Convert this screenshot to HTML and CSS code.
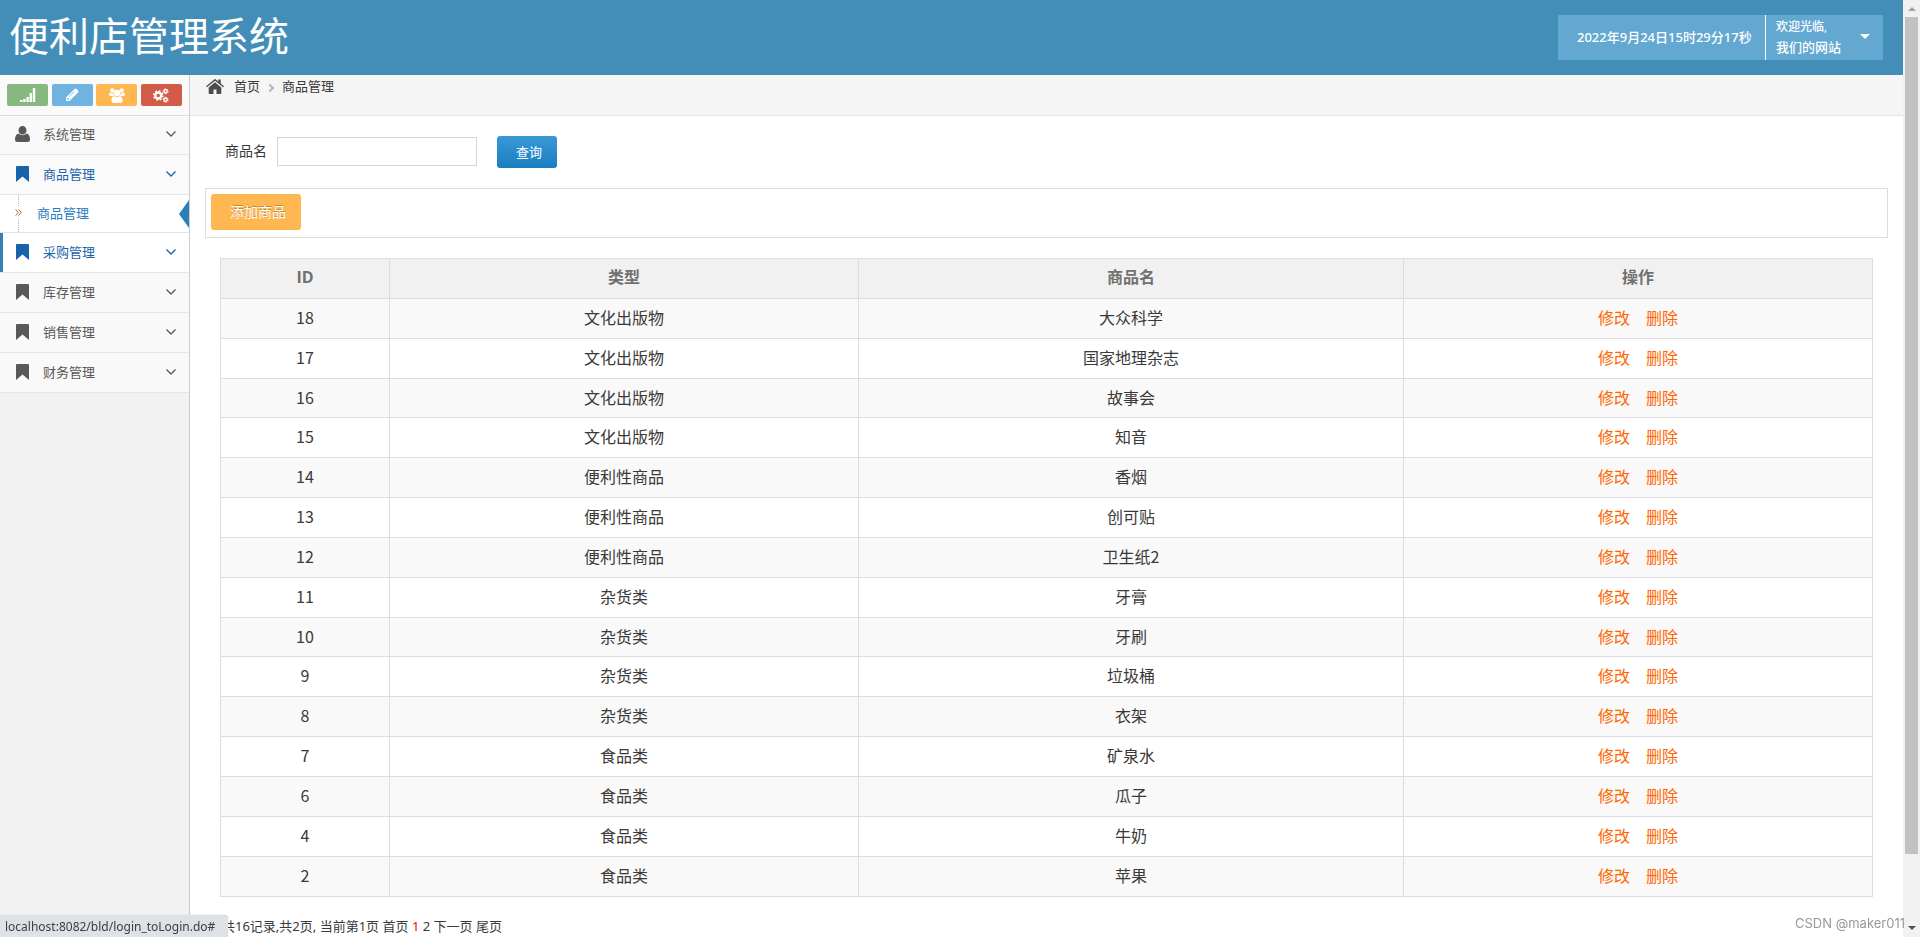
FILE: index.html
```html
<!DOCTYPE html>
<html lang="zh-CN">
<head>
<meta charset="utf-8">
<title>便利店管理系统</title>
<link rel="stylesheet" href="styles.css">
</head>
<body>
<svg class="sprite" aria-hidden="true">
  <symbol id="bookmark" viewBox="0 0 14 16"><path d="M1.500 0h11q1 0 1 1v15L7 10.500 .5 16V1q0-1 1-1z"/></symbol>
  <symbol id="user" viewBox="0 0 15 16"><path d="M7.500 0a4 4.300 0 0 1 0 8.600A4 4.300 0 0 1 7.500 0zM3.500 7.600Q7.500 11 11.500 7.600 15 8.500 15 13.500 15 16 12.500 16h-10Q0 16 0 13.500 0 8.500 3.500 7.600z"/></symbol>
  <symbol id="chevron" viewBox="0 0 10 6"><path d="M.5.500 5 5 9.500.5" fill="none" stroke="currentColor" stroke-width="1.300"/></symbol>
  <symbol id="signal" viewBox="0 0 16 14"><path d="M0 12h2.400v2H0zM3.200 11h2.400v3H3.200zM6.400 9h2.400v5H6.400zM9.600 5H12v9H9.600zM12.800 0h2.400v14h-2.400z"/></symbol>
  <symbol id="pencil" viewBox="0 0 14 14"><path fill-rule="evenodd" d="M1 9.500 9.500 1q1-1 2 0l1.500 1.500q1 1 0 2L4.500 13H1zM3 9.700 2.200 10.600v1.200h1.200l.9-.8zM8.700 3.600 4 8.400l.4.400 4.800-4.700z"/></symbol>
  <symbol id="group" viewBox="0 0 16 15"><circle cx="3.300" cy="2.500" r="2.200"/><circle cx="12.700" cy="2.500" r="2.200"/><circle cx="8" cy="5" r="3.200"/><path d="M1.200 4.700Q3 5.700 4.300 5.200q0 1.800 1 2.800H1.500Q0 8 0 6.800 0 5.200 1.200 4.700zM14.800 4.700Q13 5.700 11.700 5.200q0 1.800-1 2.800h3.800Q16 8 16 6.800q0-1.600-1.200-2.100zM5 8q3 2 6 0 2.600.5 2.600 4.800 0 2.200-2 2.200H4.400q-2 0-2-2.200Q2.400 8.500 5 8z"/></symbol>
  <symbol id="cogs" viewBox="0 0 16 15"><g fill="none" stroke="currentColor"><circle cx="5.200" cy="7.500" r="3" stroke-width="2.400"/><circle cx="5.200" cy="7.500" r="4.600" stroke-width="1.500" stroke-dasharray="1.800 1.813"/><circle cx="12.600" cy="3.300" r="1.600" stroke-width="1.500"/><circle cx="12.600" cy="3.300" r="2.600" stroke-width="1" stroke-dasharray="1.200 1.522"/><circle cx="12.600" cy="11.700" r="1.600" stroke-width="1.500"/><circle cx="12.600" cy="11.700" r="2.600" stroke-width="1" stroke-dasharray="1.200 1.522"/></g></symbol>
  <symbol id="home" viewBox="0 0 18 15"><path d="M9 3.200 15.300 8.500V14q0 1-1 1h-3.800v-4.500h-3V15H3.700q-1 0-1-1V8.500zM8.200.4q.8-.6 1.600 0L12.300 2.500V.6h2.400v3.900L18 7.300l-.8 1L9 1.700.8 8.300 0 7.300z"/></symbol>
  <symbol id="angles" viewBox="0 0 7 7"><path d="M.6.500 3.200 3.500.6 6.500M3.600.5 6.200 3.500 3.600 6.500" fill="none" stroke="currentColor"/></symbol>
</svg>
<div class="window">
<div class="app">
  <header class="topbar">
    <h1 class="brand">便利店管理系统</h1>
    <div class="userbar">
      <time class="clock">2022年9月24日15时29分17秒</time>
      <button class="welcome" type="button"><span><small>欢迎光临,</small><br>我们的网站</span><i class="caret"></i></button>
    </div>
  </header>
  <div class="body">
    <aside class="sidebar">
      <div class="shortcuts">
        <button class="short green" type="button" aria-label="统计"><svg width="16" height="14"><use href="#signal"/></svg></button>
        <button class="short blue" type="button" aria-label="编辑"><svg width="14" height="14"><use href="#pencil"/></svg></button>
        <button class="short orange" type="button" aria-label="用户"><svg width="16" height="15"><use href="#group"/></svg></button>
        <button class="short red" type="button" aria-label="设置"><svg width="16" height="15"><use href="#cogs"/></svg></button>
      </div>
      <nav class="nav">
        <a class="item" href="#"><svg class="icon" width="15" height="16"><use href="#user"/></svg><span>系统管理</span><svg class="chev" width="10" height="6"><use href="#chevron"/></svg></a>
        <a class="item open" href="#"><svg class="icon" width="15" height="16"><use href="#bookmark"/></svg><span>商品管理</span><svg class="chev" width="10" height="6"><use href="#chevron"/></svg></a>
        <a class="subitem" href="#"><svg class="angles" width="7" height="7"><use href="#angles"/></svg><span>商品管理</span></a>
        <a class="item hover" href="#"><svg class="icon" width="15" height="16"><use href="#bookmark"/></svg><span>采购管理</span><svg class="chev" width="10" height="6"><use href="#chevron"/></svg></a>
        <a class="item" href="#"><svg class="icon" width="15" height="16"><use href="#bookmark"/></svg><span>库存管理</span><svg class="chev" width="10" height="6"><use href="#chevron"/></svg></a>
        <a class="item" href="#"><svg class="icon" width="15" height="16"><use href="#bookmark"/></svg><span>销售管理</span><svg class="chev" width="10" height="6"><use href="#chevron"/></svg></a>
        <a class="item" href="#"><svg class="icon" width="15" height="16"><use href="#bookmark"/></svg><span>财务管理</span><svg class="chev" width="10" height="6"><use href="#chevron"/></svg></a>
      </nav>
    </aside>
    <main class="main">
      <div class="crumbs"><svg class="home" width="18" height="15"><use href="#home"/></svg><a href="#">首页</a><i class="sep"></i><span>商品管理</span></div>
      <form class="search">
        <label for="name">商品名</label>
        <input id="name" type="text">
        <button class="query" type="button">查询</button>
      </form>
      <div class="toolbar"><button class="add" type="button">添加商品</button></div>
      <table class="grid">
        <colgroup><col class="c-id"><col class="c-type"><col class="c-name"><col class="c-act"></colgroup>
        <thead><tr><th>ID</th><th>类型</th><th>商品名</th><th>操作</th></tr></thead>
        <tbody>
          <tr><td>18</td><td>文化出版物</td><td>大众科学</td><td><a href="#">修改</a><a href="#">删除</a></td></tr>
          <tr><td>17</td><td>文化出版物</td><td>国家地理杂志</td><td><a href="#">修改</a><a href="#">删除</a></td></tr>
          <tr><td>16</td><td>文化出版物</td><td>故事会</td><td><a href="#">修改</a><a href="#">删除</a></td></tr>
          <tr><td>15</td><td>文化出版物</td><td>知音</td><td><a href="#">修改</a><a href="#">删除</a></td></tr>
          <tr><td>14</td><td>便利性商品</td><td>香烟</td><td><a href="#">修改</a><a href="#">删除</a></td></tr>
          <tr><td>13</td><td>便利性商品</td><td>创可贴</td><td><a href="#">修改</a><a href="#">删除</a></td></tr>
          <tr><td>12</td><td>便利性商品</td><td>卫生纸2</td><td><a href="#">修改</a><a href="#">删除</a></td></tr>
          <tr><td>11</td><td>杂货类</td><td>牙膏</td><td><a href="#">修改</a><a href="#">删除</a></td></tr>
          <tr><td>10</td><td>杂货类</td><td>牙刷</td><td><a href="#">修改</a><a href="#">删除</a></td></tr>
          <tr><td>9</td><td>杂货类</td><td>垃圾桶</td><td><a href="#">修改</a><a href="#">删除</a></td></tr>
          <tr><td>8</td><td>杂货类</td><td>衣架</td><td><a href="#">修改</a><a href="#">删除</a></td></tr>
          <tr><td>7</td><td>食品类</td><td>矿泉水</td><td><a href="#">修改</a><a href="#">删除</a></td></tr>
          <tr><td>6</td><td>食品类</td><td>瓜子</td><td><a href="#">修改</a><a href="#">删除</a></td></tr>
          <tr><td>4</td><td>食品类</td><td>牛奶</td><td><a href="#">修改</a><a href="#">删除</a></td></tr>
          <tr><td>2</td><td>食品类</td><td>苹果</td><td><a href="#">修改</a><a href="#">删除</a></td></tr>
        </tbody>
      </table>
      <div class="pager">共16记录,共2页, 当前第1页 <a href="#">首页</a> <b>1</b> <a href="#">2</a> <a href="#">下一页</a> <a href="#">尾页</a></div>
    </main>
  </div>
</div>
<div class="scrollbar"><i class="up"></i><i class="thumb"></i><i class="down"></i></div>
</div>
<div class="status">localhost:8082/bld/login_toLogin.do#</div>
<div class="watermark">CSDN @maker011</div>
</body>
</html>
```
FILE: styles.css
```css
* { box-sizing: border-box; }
body {
  margin: 0;
  overflow: hidden;
  background: #fff;
  color: #393939;
  font: 13px/20px "Open Sans", "Noto Sans CJK SC", sans-serif;
}
a { color: inherit; text-decoration: none; }
button { border: 0; padding: 0; font: inherit; cursor: pointer; }
svg { fill: currentColor; flex: none; }
.sprite { display: none; }

.window { display: flex; height: 100vh; }
.app { flex: 1; min-width: 0; display: flex; flex-direction: column; }

.topbar {
  display: flex;
  justify-content: space-between;
  align-items: center;
  height: 75px;
  flex: none;
  padding: 0 20px 0 9px;
  background: #438eb9;
  color: #fff;
}
.brand { margin: 0; padding-bottom: 3px; font-size: 40px; line-height: 72px; font-weight: 400; }
.userbar { display: flex; height: 45px; }
.clock {
  width: 208px;
  padding-left: 19px;
  background: #62a8d1;
  border-right: 1px solid #fff;
  font-family: "Noto Sans", "Noto Sans CJK SC", sans-serif;
  font-weight: 500;
  line-height: 45px;
  white-space: nowrap;
}
.welcome {
  display: flex;
  align-items: center;
  justify-content: space-between;
  width: 117px;
  padding: 0 13px 2px 10px;
  background: #62a8d1;
  color: #fff;
  font-weight: 500;
  text-align: left;
  line-height: 21px;
}
.welcome small { font-size: 12px; }
.caret { border: 5px solid transparent; border-top: 5px solid #fff; border-bottom: 0; }

.body { flex: 1; display: flex; }
.sidebar { width: 190px; flex: none; background: #f2f2f2; border-right: 1px solid #ccc; }
.shortcuts {
  display: flex;
  justify-content: space-between;
  padding: 9px 7px;
  height: 40px;
  background: #fafafa;
}
.short {
  display: flex;
  align-items: center;
  justify-content: center;
  width: 41px;
  height: 22px;
  border-radius: 2px;
  color: #fff;
}
.green { background: #87b87f; }
.blue { background: #6fb3e0; }
.orange { background: #ffb752; }
.red { background: #d15b47; }

.nav { border-top: 1px solid #ddd; }
.item {
  display: flex;
  align-items: center;
  height: 40px;
  padding: 0 13px 2px 15px;
  background: #f9f9f9;
  border-bottom: 1px solid #e5e5e5;
  color: #585858;
}
.item:first-child { height: 39px; }
.item .icon { margin-right: 13px; }
.item .chev { margin-left: auto; }
.open { color: #1963aa; background: #fafafa; }
.hover { color: #1963aa; background: #fff; box-shadow: inset 3px 0 #3382af; }
.subitem {
  display: flex;
  align-items: center;
  position: relative;
  height: 38px;
  padding: 0 0 2px 15px;
  background: #fff;
  border-bottom: 1px solid #e5e5e5;
  color: #2b7dbc;
}
.subitem::before {
  content: "";
  position: absolute;
  left: 18px;
  top: 0;
  bottom: 0;
  border-left: 1px dotted #9dbdd6;
}
.subitem::after {
  content: "";
  position: absolute;
  right: 0;
  top: 5px;
  border: 14px solid transparent;
  border-right: 10px solid #2b7dbc;
  border-left: 0;
}
.subitem .angles { position: relative; background: #fff; color: #c86139; outline: 2px solid #fff; margin-right: 15px; }

.main { flex: 1; min-width: 0; }
.crumbs {
  display: flex;
  align-items: flex-start;
  height: 41px;
  padding: 1px 16px;
  background: #f5f5f5;
  border-bottom: 1px solid #e5e5e5;
}
.home { margin: 3px 10px 0 0; color: #4c4c4c; }
.sep {
  width: 6px;
  height: 6px;
  margin: 9px 9px 0 7px;
  border: solid #b2b6bf;
  border-width: 2px 2px 0 0;
  transform: rotate(45deg);
}
.search { display: flex; align-items: center; height: 72px; padding-left: 35px; font-size: 14px; }
.search label { padding-bottom: 2px; }
.search input { width: 200px; height: 29px; margin: 0 20px 1px 10px; border: 1px solid #d5d5d5; font: inherit; }
.query {
  width: 60px;
  height: 32px;
  padding-left: 4px;
  border-radius: 3px;
  background: linear-gradient(#3b98d6, #197ec1);
  color: #fff;
  font-size: 13px;
}
.toolbar { height: 50px; margin: 0 15px; padding: 5px; border: 1px solid #ddd; }
.add {
  width: 90px;
  height: 36px;
  padding: 0 0 1px 4px;
  border-radius: 3px;
  background: #ffb752;
  color: #fff;
  font-size: 14px;
  text-shadow: 0 -1px 0 rgba(0, 0, 0, .25);
}

.grid {
  width: calc(100% - 60px);
  margin: 20px 30px 0;
  border-collapse: collapse;
  table-layout: fixed;
  font-family: "Noto Sans CJK SC", sans-serif;
  font-size: 16px;
  text-align: center;
}
.c-id { width: 169px; }
.c-type, .c-act { width: 28.4%; }
.grid th, .grid td { height: 40px; padding: 0 0 3px; border: 1px solid #ddd; font-weight: 400; }
.grid th {
  background: #f1f1f1;
  color: #707070;
  font-family: "Open Sans", "Noto Sans CJK SC", sans-serif;
  font-weight: 700;
}
.grid tbody tr:nth-child(odd) { background: #f9f9f9; }
.grid tbody tr:nth-child(3) td, .grid tbody tr:nth-child(9) td { height: 39px; }
.grid td a { color: #f60; }
.grid td a + a { margin-left: 16px; }

.pager { padding: 19px 0 0 32px; font-family: "Noto Sans", "Noto Sans CJK SC", sans-serif; }
.pager b { color: #f00; font-weight: 400; }

.scrollbar { display: flex; flex-direction: column; align-items: center; width: 17px; background: #f1f1f1; }
.up, .down { border: 4px solid transparent; }
.up { border-top: 0; border-bottom-color: #a3a3a3; margin: 7px 0 6px; }
.thumb { width: 13px; height: 837px; background: #c1c1c1; }
.down { border-bottom: 0; border-top-color: #505050; margin: auto 0 7px; }

.status {
  position: fixed;
  left: 0;
  bottom: 0;
  width: 228px;
  height: 22px;
  padding-left: 5px;
  background: #dee1e6;
  border-radius: 0 4px 0 0;
  box-shadow: 0 0 1px #999;
  color: #3c4043;
  font: 12px/23px "Noto Sans", sans-serif;
  white-space: nowrap;
}
.watermark { position: fixed; right: 15px; bottom: 4px; color: #999; font: 13px/20px Inter, sans-serif; }
```
